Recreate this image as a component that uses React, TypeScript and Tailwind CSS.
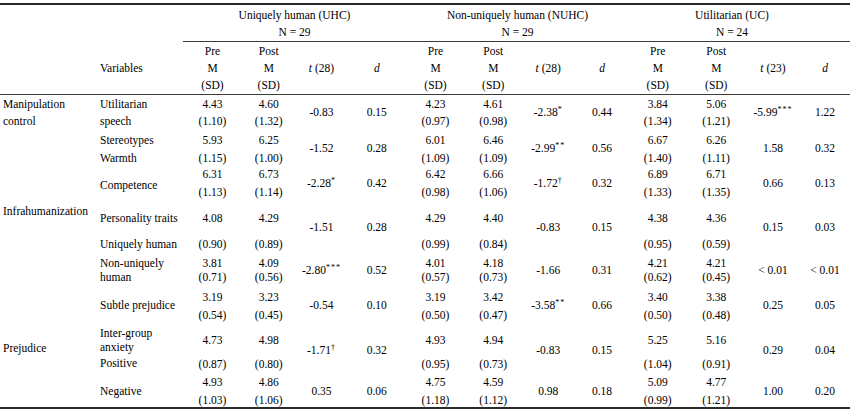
import type { ReactNode } from "react";

type Group = [string, string, string, string, string, string, string];

type Row = {
  pair: string;
  gap: string;
  stat: string;
  label: ReactNode;
  groups: Group[];
};

const rows: Row[] = [
  {
    pair: "pt-[2px]",
    gap: "mt-[3px]",
    stat: "pt-[10px]",
    label: (
      <div className="pt-[2px]">
        <div>Utilitarian</div>
        <div className="mt-[3px]">speech</div>
      </div>
    ),
    groups: [
      ["4.43", "(1.10)", "4.60", "(1.32)", "-0.83", "", "0.15"],
      ["4.23", "(0.97)", "4.61", "(0.98)", "-2.38", "*", "0.44"],
      ["3.84", "(1.34)", "5.06", "(1.21)", "-5.99", "***", "1.22"],
    ],
  },
  {
    pair: "pt-[3px]",
    gap: "mt-[3.5px]",
    stat: "pt-[11px]",
    label: (
      <div className="pt-[3px]">
        <div>Stereotypes</div>
        <div className="mt-[3.5px]">Warmth</div>
      </div>
    ),
    groups: [
      ["5.93", "(1.15)", "6.25", "(1.00)", "-1.52", "", "0.28"],
      ["6.01", "(1.09)", "6.46", "(1.09)", "-2.99", "**", "0.56"],
      ["6.67", "(1.40)", "6.26", "(1.11)", "1.58", "", "0.32"],
    ],
  },
  {
    pair: "pt-[0.5px]",
    gap: "mt-[4.5px]",
    stat: "pt-[9.5px]",
    label: <div className="pt-[12px]">Competence</div>,
    groups: [
      ["6.31", "(1.13)", "6.73", "(1.14)", "-2.28", "*", "0.42"],
      ["6.42", "(0.98)", "6.66", "(1.06)", "-1.72", "†", "0.32"],
      ["6.89", "(1.33)", "6.71", "(1.35)", "0.66", "", "0.13"],
    ],
  },
  {
    pair: "pt-[10px]",
    gap: "mt-[11.5px]",
    stat: "pt-[19px]",
    label: (
      <div className="pt-[10px]">
        <div>Personality traits</div>
        <div className="mt-[11.5px]">Uniquely human</div>
      </div>
    ),
    groups: [
      ["4.08", "(0.90)", "4.29", "(0.89)", "-1.51", "", "0.28"],
      ["4.29", "(0.99)", "4.40", "(0.84)", "-0.83", "", "0.15"],
      ["4.38", "(0.95)", "4.36", "(0.59)", "0.15", "", "0.03"],
    ],
  },
  {
    pair: "pt-[2px]",
    gap: "mt-0",
    stat: "pt-[9px]",
    label: (
      <div className="pt-[2px]">
        <div>Non-uniquely</div>
        <div>human</div>
      </div>
    ),
    groups: [
      ["3.81", "(0.71)", "4.09", "(0.56)", "-2.80", "***", "0.52"],
      ["4.01", "(0.57)", "4.18", "(0.73)", "-1.66", "", "0.31"],
      ["4.21", "(0.62)", "4.21", "(0.45)", "< 0.01", "", "< 0.01"],
    ],
  },
  {
    pair: "pt-[3px]",
    gap: "mt-[4px]",
    stat: "pt-[11px]",
    label: <div className="pt-[11px]">Subtle prejudice</div>,
    groups: [
      ["3.19", "(0.54)", "3.23", "(0.45)", "-0.54", "", "0.10"],
      ["3.19", "(0.50)", "3.42", "(0.47)", "-3.58", "**", "0.66"],
      ["3.40", "(0.50)", "3.38", "(0.48)", "0.25", "", "0.05"],
    ],
  },
  {
    pair: "pt-[10px]",
    gap: "mt-[9.5px]",
    stat: "pt-[20px]",
    label: (
      <div className="pt-[3px]">
        <div>Inter-group</div>
        <div>anxiety</div>
        <div className="mt-[2px]">Positive</div>
      </div>
    ),
    groups: [
      ["4.73", "(0.87)", "4.98", "(0.80)", "-1.71", "†", "0.32"],
      ["4.93", "(0.95)", "4.94", "(0.73)", "-0.83", "", "0.15"],
      ["5.25", "(1.04)", "5.16", "(0.91)", "0.29", "", "0.04"],
    ],
  },
  {
    pair: "pt-[2px]",
    gap: "mt-[4px]",
    stat: "pt-[11px]",
    label: <div className="pt-[11px]">Negative</div>,
    groups: [
      ["4.93", "(1.03)", "4.86", "(1.06)", "0.35", "", "0.06"],
      ["4.75", "(1.18)", "4.59", "(1.12)", "0.98", "", "0.18"],
      ["5.09", "(0.99)", "4.77", "(1.21)", "1.00", "", "0.20"],
    ],
  },
];

const groups = [
  { name: "Uniquely human (UHC)", n: "N = 29", df: "28", pad: "" },
  { name: "Non-uniquely human (NUHC)", n: "N = 29", df: "28", pad: "" },
  { name: "Utilitarian (UC)", n: "N = 24", df: "23", pad: "pr-[15px]" },
];

function Pair({ top, bottom, pt, gap }: { top: string; bottom: string; pt: string; gap: string }) {
  return (
    <div className={`text-center ${pt}`}>
      <div>{top}</div>
      <div className={gap}>{bottom}</div>
    </div>
  );
}

function Stat({ value, sup, pt }: { value: string; sup?: string; pt: string }) {
  return (
    <div className={`text-center ${pt}`}>
      {value}
      {sup ? <sup className="text-[8px] tracking-[1px]">{sup}</sup> : null}
    </div>
  );
}

// first column: category labels, some spanning several rows
function Lead({ i }: { i: number }) {
  if (i === 0)
    return (
      <div className="pl-[3px] pt-[2px]">
        <div>Manipulation</div>
        <div className="mt-[3px]">control</div>
      </div>
    );
  if (i === 1) return <div className="row-span-4 pl-[3px] pt-[74px]">Infrahumanization</div>;
  if (i === 5) return <div className="row-span-3 pl-[3px] pt-[54px]">Prejudice</div>;
  return null;
}

export default function App() {
  return (
    <div className="min-h-screen bg-white pt-[3px] font-['Liberation_Serif',serif] text-[11.5px] leading-[14px] text-black">
      <div className="grid w-[850px] grid-cols-[97px_86px_59px_53.5px_52px_58.5px_59px_56.5px_53.5px_54px_57.5px_59.5px_54px_50px] grid-rows-[37px_53px_35px_36px_35px_53px_33px_36px_50px_34px] border-y-2 border-[#2a2a2a]">
        {/* header */}
        <div className="row-span-2 border-b border-[#3a3a3a]" />
        <div />
        {groups.map((g) => (
          <div
            key={g.name}
            className={`col-span-4 border-b border-[#3a3a3a] pt-[1.5px] text-center leading-[17px] ${g.pad}`}
          >
            <div>{g.name}</div>
            <div>{g.n}</div>
          </div>
        ))}

        <div className="flex items-center border-b border-[#3a3a3a] pl-[3px]">Variables</div>
        {groups.map((g) => [
          <div key={g.name + "pre"} className="flex flex-col justify-center border-b border-[#3a3a3a] text-center leading-[17px]">
            <div>Pre</div>
            <div>M</div>
            <div>(SD)</div>
          </div>,
          <div key={g.name + "post"} className="flex flex-col justify-center border-b border-[#3a3a3a] text-center leading-[17px]">
            <div>Post</div>
            <div>M</div>
            <div>(SD)</div>
          </div>,
          <div key={g.name + "t"} className="flex items-center justify-center border-b border-[#3a3a3a]">
            <span>
              <i>t</i> ({g.df})
            </span>
          </div>,
          <div key={g.name + "d"} className="flex items-center justify-center border-b border-[#3a3a3a]">
            <i>d</i>
          </div>,
        ])}

        {/* body */}
        {rows.map((r, i) => [
          <Lead key={`lead${i}`} i={i} />,
          <div key={`label${i}`} className="pl-[3px]">
            {r.label}
          </div>,
          ...r.groups.map((g, j) => [
            <Pair key={`a${i}${j}`} top={g[0]} bottom={g[1]} pt={r.pair} gap={r.gap} />,
            <Pair key={`b${i}${j}`} top={g[2]} bottom={g[3]} pt={r.pair} gap={r.gap} />,
            <Stat key={`c${i}${j}`} value={g[4]} sup={g[5]} pt={r.stat} />,
            <Stat key={`d${i}${j}`} value={g[6]} pt={r.stat} />,
          ]),
        ])}
      </div>
    </div>
  );
}
